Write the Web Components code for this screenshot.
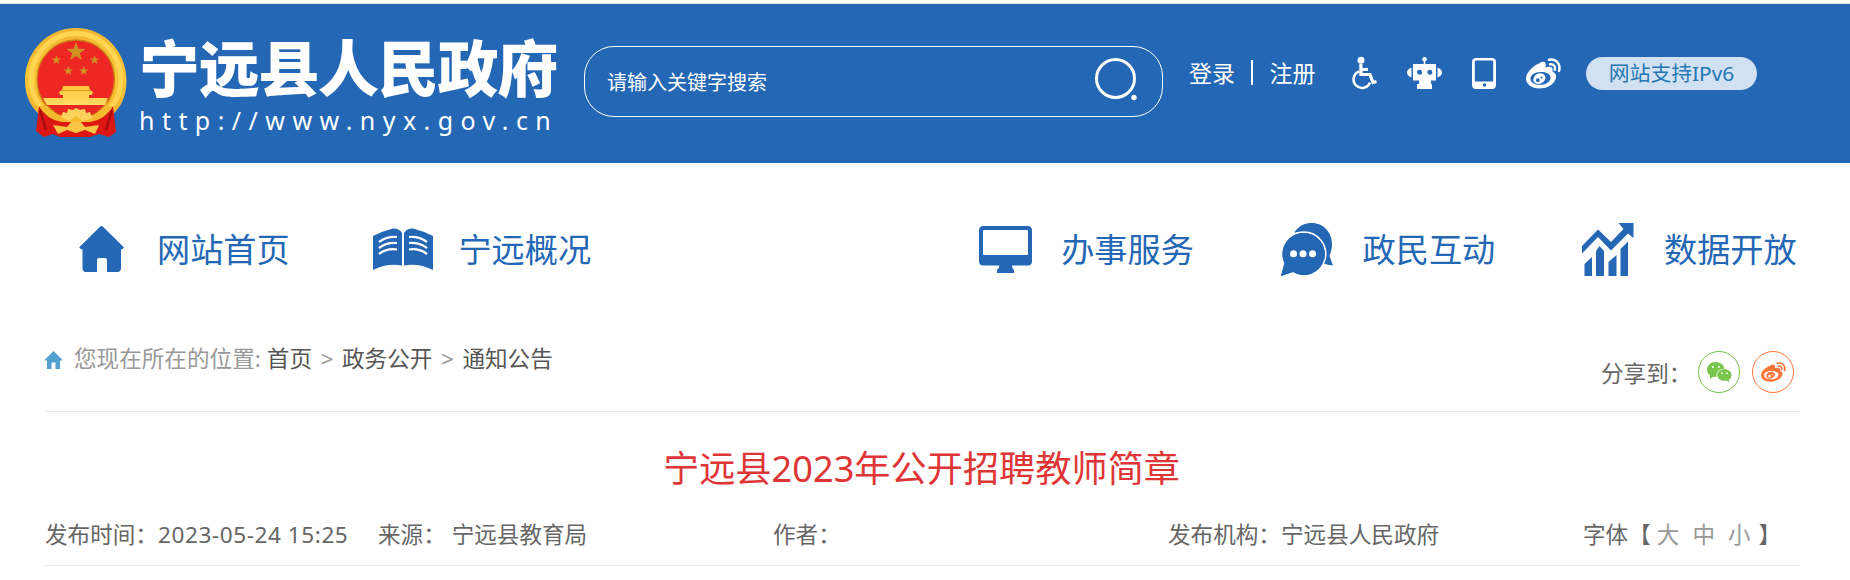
<!DOCTYPE html>
<html lang="zh-CN">
<head>
<meta charset="utf-8">
<title>宁远县2023年公开招聘教师简章</title>
<style>
  body {
    margin: 0;
    width: 1850px;
    height: 580px;
    overflow: hidden;
    background: #fff;
    color: #666;
    font-family: "Noto Sans", "Noto Sans CJK SC", sans-serif;
  }
</style>
</head>
<body>
<gov-page></gov-page>

<script>
const WEIBO = `
  <path fill-rule="evenodd" d="M13 5.500C17 2.500 21 3.500 19.500 9.500C23.500 8 27.500 9 26.500 13.500C30 15.500 31 18 29.500 21.500C27 27.500 20 30.500 13.500 30.500C6 30.500 0 26.500 0 20.500C0 14.500 7 8 13 5.500ZM14.500 14C8.500 14 4.500 17 4.500 20.500C4.500 24.500 8.500 26.800 14 26.800C20 26.800 24.500 24 24.500 19.500C24.500 16 20.500 14 14.500 14Z"/>
  <path fill-rule="evenodd" d="M14 15.200C18 15.200 20.300 18 19.300 21C18.300 24.500 14.500 26.300 11.500 25.800C8 25.300 6.500 22.500 7.700 20C8.700 17 11.500 15.200 14 15.200ZM11.800 20.300A1.900 1.900 0 1 0 11.900 24.100A1.900 1.900 0 1 0 11.800 20.300ZM15.500 18.500A1 1 0 1 0 15.600 20.500A1 1 0 1 0 15.500 18.500Z"/>
  <path d="M23 1.800C30 .5 35 6 33 13M24 6.300C28 6 29.800 8.500 28.800 11.800" fill="none" stroke="currentColor" stroke-width="2.500" stroke-linecap="round"/>`;

const ICONS = {
  search: ['0 0 42 42', `
    <circle cx="20.500" cy="20.500" r="19" fill="none" stroke="currentColor" stroke-width="3"/>
    <circle cx="39" cy="39.500" r="2.700"/>`],
  access: ['0 0 25 32', `
    <circle cx="9" cy="3.300" r="3.500"/>
    <path d="M8.900 7V17.500H18L21 25.500L24.500 24.500M9 12.500H16" fill="none" stroke="currentColor" stroke-width="3.200"/>
    <path d="M7 14.500A8.500 8.500 0 1 0 18 25.500" fill="none" stroke="currentColor" stroke-width="2.600"/>`],
  robot: ['0 0 35 32', `
    <circle cx="17.500" cy="2.300" r="2.300"/>
    <path d="M16.700 3H18.300V8H16.700Z"/>
    <path fill-rule="evenodd" d="M6 7H29V23.500H24V27H25V32H10V27H12V23.500H6ZM12.500 12.800A2.500 2.500 0 1 0 12.600 17.800A2.500 2.500 0 1 0 12.500 12.800ZM22.800 12.800A2.500 2.500 0 1 0 22.900 17.800A2.500 2.500 0 1 0 22.800 12.800Z"/>
    <path d="M4.500 10.500V20.500C1.500 19.500 0 17.500 0 15.500S1.500 11.500 4.500 10.500ZM30.500 10.500V20.500C33.500 19.500 35 17.500 35 15.500S33.500 11.500 30.500 10.500Z"/>`],
  phone: ['0 0 24 31', `
    <path fill-rule="evenodd" d="M4 0H20Q24 0 24 4V27Q24 31 20 31H4Q0 31 0 27V4Q0 0 4 0ZM4 2.500Q2.800 2.500 2.800 4V23.500H21.200V4Q21.200 2.500 20 2.500ZM12.500 25.300A1.700 1.700 0 1 0 12.600 28.700A1.700 1.700 0 1 0 12.500 25.300Z"/>`],
  weibo: ['0 0 35 31', WEIBO],
  wechat: ['0 0 25 20', `
    <path fill-rule="evenodd" d="M8.500 0C13.500 0 17 3 17.500 6.800C12 7 9 10 9.500 14.800L6 15L3 17V13.500C1 12 0 10 0 7.500C0 3.500 4 0 8.500 0ZM5.800 4A1 1 0 1 0 5.900 6A1 1 0 1 0 5.800 4ZM11.800 4A1 1 0 1 0 11.900 6A1 1 0 1 0 11.800 4Z"/>
    <path fill-rule="evenodd" d="M17.500 7.300C21.500 7.300 24.500 10 24.500 13C24.500 15 23.500 16.500 22 17.500L22.500 20L19.500 18.700C14 19.500 10.300 16.700 10.300 13C10.300 10 13.500 7.300 17.500 7.300ZM15 10.300A.9.9 0 1 0 15.100 12.100A.9.9 0 1 0 15 10.300ZM20 10.300A.9.9 0 1 0 20.100 12.100A.9.9 0 1 0 20 10.300Z"/>`],
  crumb: ['0 0 17 18', `<path d="M8.500 0L17 8.500V9.500H15V18H10.500V11.500H6.500V18H2V9.500H0V8.500Z"/>`],
  home: ['0 0 45 46', `<path d="M21 .8Q22.500-.6 24 .8L44.500 21Q45.500 22.500 42 23.500V42Q42 46 38 46H28V34Q28 32 26 32H20Q18 32 18 34V46H7Q3.500 46 3.500 42V23.500Q-.5 22.500 .5 21Z"/>`],
  book: ['0 0 60 42', `
    <path d="M0 8Q10 3 20 .5Q26 0 29 5V37.500Q14 35 0 42ZM60 8Q50 3 40 .5Q34 0 31 5V37.500Q46 35 60 42Z"/>
    <path d="M6 14Q14 8 24 9M6 20Q14 14 24 15M6 26Q14 20 24 21.500M54 14Q46 8 36 9M54 20Q46 14 36 15M54 26Q46 20 36 21.500" fill="none" stroke="#fff" stroke-width="2.200"/>`],
  monitor: ['0 0 53 47', `
    <path fill-rule="evenodd" d="M4.500 0H48.500Q53 0 53 4.500V35Q53 39.500 48.500 39.500H33Q33 42.500 35 44V47H18V44Q20.500 42.500 20.500 39.500H4.500Q0 39.500 0 35V4.500Q0 0 4.500 0ZM5 4Q4 4 4 5V28Q4 29 5 29H48Q49 29 49 28V5Q49 4 48 4Z"/>`],
  chat: ['0 0 52 53', `
    <path d="M13.500 9C19 2 24 0 31 0C42 0 51 9 51 21C51 27 49 31 48.500 33L52 42.500Q47 42 41 40Z"/>
    <path d="M22 10A21 21 0 1 1 12 49L0 53L3.500 40A21 21 0 0 1 22 10Z" stroke="#fff" stroke-width="3.400" paint-order="stroke"/>
    <path d="M22 10A21 21 0 1 1 12 49L0 53L3.500 40A21 21 0 0 1 22 10Z"/>
    <g fill="#fff"><circle cx="12.500" cy="30.800" r="3.500"/><circle cx="22" cy="30.800" r="3.500"/><circle cx="31.500" cy="30.800" r="3.500"/></g>`],
  chart: ['0 0 52 53', `
    <path d="M0 23L16 6.500L29 19L41.500 6L36.500 0H51.500V15L46 10.500L29 27.500L16 14L0 30.500Z"/>
    <path d="M2.500 41L10 34V53H2.500ZM14 28L17.500 23L22 28V53H14ZM26.500 39L34.500 32V53H26.500ZM38.500 26L46 18.500V53H38.500Z"/>`],
};

class SiteIcon extends HTMLElement {
  connectedCallback() {
    const [box, shapes] = ICONS[this.getAttribute('name')];
    this.attachShadow({ mode: 'open' }).innerHTML = `
      <style>
        :host { display: block; flex: none; }
        svg { display: block; width: 100%; height: 100%; overflow: visible; fill: currentColor; }
      </style>
      <svg viewBox="${box}" preserveAspectRatio="none" aria-hidden="true">${shapes}</svg>`;
  }
}
customElements.define('site-icon', SiteIcon);

function star(cx, cy, r) {
  const points = [];
  for (let i = 0; i < 10; i++) {
    const angle = -Math.PI / 2 + i * Math.PI / 5;
    const d = i % 2 ? r * 0.4 : r;
    points.push(`${(cx + Math.cos(angle) * d).toFixed(1)},${(cy + Math.sin(angle) * d).toFixed(1)}`);
  }
  return `<polygon points="${points.join(' ')}"/>`;
}

class NationalEmblem extends HTMLElement {
  connectedCallback() {
    this.attachShadow({ mode: 'open' }).innerHTML = `
      <style>
        :host { display: block; flex: none; width: 102px; height: 110px; }
        svg { display: block; }
      </style>
      <svg width="102" height="110" viewBox="0 0 102 110" aria-hidden="true">
        <defs>
          <linearGradient id="rim" x2="0" y2="1">
            <stop offset="0" stop-color="#f3b632"/>
            <stop offset=".5" stop-color="#fbc636"/>
            <stop offset="1" stop-color="#f2ae28"/>
          </linearGradient>
          <linearGradient id="gold" x2="0" y2="1">
            <stop offset="0" stop-color="#ffc93c"/>
            <stop offset="1" stop-color="#ffdb62"/>
          </linearGradient>
        </defs>
        <path d="M51 0C79 0 101.500 23 101.500 53C101.500 69 95 80 88 86L78 98H24L14 86C7 80 0 69 0 53C0 23 23 0 51 0Z" fill="url(#rim)"/>
        <path d="M51 5.500C76 5.500 96 27 96 52C96 64 92 73 84 81M51 5.500C26 5.500 6 27 6 52C6 64 10 73 18 81" fill="none" stroke="#ffd552" stroke-width="5"/>
        <path d="M51 12C73 12 89.500 30 89.500 51C89.500 63 86 71 79 78L68 87H34L22 78C15 71 12 63 12 51C12 30 29 12 51 12Z" fill="#ee2724" stroke="#c98518" stroke-width="1.400"/>
        <g fill="#cf9322">
          ${star(51, 24, 10)}${star(31.4, 32, 5)}${star(69.5, 32, 5)}${star(43.3, 43, 5)}${star(58.8, 43, 5)}
        </g>
        <path d="M38 58H64L65 62L68 64L67 67H64V70H83L80 77H22L18 70H38V67H35L34 64L37 62Z" fill="url(#gold)"/>
        <path d="M36 62.500H66" stroke="#de8d1d" stroke-width=".8"/>
        <path d="M14 78Q21 90 35 93H67Q81 90 88 78L91 104L84 109L74 106L65 109H35L28 106L19 109L11 103Z" fill="#dc1712"/>
        <path d="M15 82L21 102M87 82L81 102" stroke="#a90c10" stroke-width="2.500"/>
        <path d="M24 77H79L72 84L65 88H37L30 84Z" fill="#e82822"/>
        <path d="M14 78Q22 92 37 94H65Q80 92 88 78L80 78Q73 87 64 88H38Q29 87 22 78Z" fill="#f4b92f"/>
        <path d="M36 89L38 84L42 85L43 81L48 82L51 80L55 82L60 81L61 85L65 84L67 90L58 93L51 88L44 93Z" fill="#ffd35b"/>
        <path d="M28 97L42 99L46 94H56L60 99L74 97L70 106L60 102L51 105L42 102L33 106Z" fill="#f9c643"/>
      </svg>`;
  }
}
customElements.define('national-emblem', NationalEmblem);

class SearchBox extends HTMLElement {
  connectedCallback() {
    this.attachShadow({ mode: 'open' }).innerHTML = `
      <style>
        :host {
          display: flex;
          justify-content: space-between;
          flex: none;
          box-sizing: border-box;
          width: 579px;
          height: 71px;
          padding: 11px 25px 0 22px;
          border: 1px solid #fff;
          border-radius: 30px;
        }
        span { font-size: 20px; line-height: 49px; }
        site-icon { width: 42px; height: 42px; }
      </style>
      <span><slot></slot></span>
      <site-icon name="search"></site-icon>`;
  }
}
customElements.define('search-box', SearchBox);

class SiteHeader extends HTMLElement {
  connectedCallback() {
    this.attachShadow({ mode: 'open' }).innerHTML = `
      <style>
        :host {
          display: flex;
          align-items: flex-start;
          box-sizing: border-box;
          height: 160px;
          margin-top: 3px;
          padding-left: 25px;
          border-top: 1px solid #e4e6e8;
          background: #2367b5;
          color: #fff;
          white-space: nowrap;
        }
        national-emblem { margin-top: 24px; }
        .brand { width: 445px; margin: 34px 0 0 12px; }
        h1 { margin: 0; font-size: 61px; line-height: 61px; letter-spacing: -1.300px; font-weight: 900; }
        .url { margin-top: 6px; font-size: 25px; line-height: 30px; letter-spacing: 7.450px; }
        search-box { margin-top: 42px; }
        .account {
          display: flex;
          align-items: center;
          width: 163px;
          height: 34px;
          margin: 51px 0 0 26px;
          font-size: 23px;
        }
        .account i { width: 1.500px; height: 25px; margin: 1px 17px 0 16px; background: #fff; }
        .tools { display: flex; align-items: center; gap: 30px; height: 34px; margin-top: 52px; }
        .access { width: 25px; height: 32px; }
        .robot { width: 35px; height: 32px; }
        .phone { width: 24px; height: 31px; }
        .weibo { width: 35px; height: 31px; }
        .ipv6 {
          width: 171px;
          height: 33px;
          margin: 53px 0 0 25px;
          border-radius: 17px;
          background: #d2e1f1;
          color: #2278b4;
          font-size: 20.800px;
          line-height: 32px;
          text-align: center;
        }
      </style>
      <national-emblem></national-emblem>
      <div class="brand">
        <h1>宁远县人民政府</h1>
        <div class="url">http://www.nyx.gov.cn</div>
      </div>
      <search-box>请输入关键字搜索</search-box>
      <div class="account"><span>登录</span><i></i><span>注册</span></div>
      <div class="tools">
        <site-icon class="access" name="access"></site-icon>
        <site-icon class="robot" name="robot"></site-icon>
        <site-icon class="phone" name="phone"></site-icon>
        <site-icon class="weibo" name="weibo"></site-icon>
      </div>
      <div class="ipv6">网站支持IPv6</div>`;
  }
}
customElements.define('site-header', SiteHeader);

class NavItem extends HTMLElement {
  connectedCallback() {
    const [w, h] = this.getAttribute('size').split('x');
    this.attachShadow({ mode: 'open' }).innerHTML = `
      <style>
        :host { display: flex; align-items: center; height: 60px; }
        .icon { display: flex; justify-content: center; flex: none; width: 91px; }
        site-icon { width: ${w}px; height: ${h}px; }
        span { margin: 2px 0 0 10px; font-size: 33.200px; line-height: 60px; white-space: nowrap; }
      </style>
      <div class="icon"><site-icon name="${this.getAttribute('icon')}"></site-icon></div>
      <span><slot></slot></span>`;
  }
}
customElements.define('nav-item', NavItem);

class SiteNav extends HTMLElement {
  connectedCallback() {
    this.attachShadow({ mode: 'open' }).innerHTML = `
      <style>
        :host {
          display: grid;
          grid-template-columns: repeat(6, 301.400px);
          padding: 56px 0 0 56px;
          height: 116px;
          color: #2367b5;
        }
        .service { grid-column: 4; }
      </style>
      <nav-item icon="home" size="45x46">网站首页</nav-item>
      <nav-item icon="book" size="60x42">宁远概况</nav-item>
      <nav-item class="service" icon="monitor" size="53x47">办事服务</nav-item>
      <nav-item icon="chat" size="52x53">政民互动</nav-item>
      <nav-item icon="chart" size="52x53">数据开放</nav-item>`;
  }
}
customElements.define('site-nav', SiteNav);

class CrumbBar extends HTMLElement {
  connectedCallback() {
    this.attachShadow({ mode: 'open' }).innerHTML = `
      <style>
        :host {
          display: flex;
          justify-content: space-between;
          box-sizing: border-box;
          height: 77px;
          margin: 0 50px 0 45px;
          border-bottom: 1px solid #e2e4e5;
          font-size: 22.600px;
          line-height: 30px;
          white-space: nowrap;
        }
        .path { display: flex; height: 30px; margin-top: 9px; color: #999; }
        .path site-icon { width: 17px; height: 18px; margin: 7px 12px 0 0; color: #529fd2; }
        .path b { font-weight: 400; color: #555; }
        .path b:first-of-type { margin-left: 6px; }
        .path i { width: 30px; font-style: normal; text-align: center; }
        .share { display: flex; align-items: center; height: 42px; margin: 16px 6px 0 0; }
        .share span { width: 97px; margin-top: 4px; line-height: 42px; }
        .round {
          display: flex;
          align-items: center;
          justify-content: center;
          box-sizing: border-box;
          width: 42px;
          height: 42px;
          border: 1px solid currentColor;
          border-radius: 50%;
        }
        .wechat { color: #79c44a; }
        .wechat site-icon { width: 25px; height: 20px; }
        .weibo { margin-left: 12px; color: #ff763b; }
        .weibo site-icon { width: 25px; height: 20px; }
      </style>
      <div class="path">
        <site-icon name="crumb"></site-icon>
        <span>您现在所在的位置:</span><b>首页</b><i>&gt;</i><b>政务公开</b><i>&gt;</i><b>通知公告</b>
      </div>
      <div class="share">
        <span>分享到：</span>
        <div class="round wechat"><site-icon name="wechat"></site-icon></div>
        <div class="round weibo"><site-icon name="weibo"></site-icon></div>
      </div>`;
  }
}
customElements.define('crumb-bar', CrumbBar);

class ArticleHead extends HTMLElement {
  connectedCallback() {
    this.attachShadow({ mode: 'open' }).innerHTML = `
      <style>
        :host { display: block; margin: 0 50px 0 45px; white-space: nowrap; }
        h2 {
          margin: 0 2px 0 0;
          padding-top: 31px;
          color: #de3636;
          font-size: 36.200px;
          line-height: 50px;
          font-weight: 400;
          text-align: center;
        }
        .meta {
          display: grid;
          grid-template-columns: 333px 395px 395px 415px 1fr;
          height: 72px;
          border-bottom: 1px solid #ebebeb;
          font-size: 22.600px;
          line-height: 84px;
        }
        .date { letter-spacing: .55px; }
        .size { display: flex; }
        .size span { color: #999; margin-right: 13px; }
        .size span:first-of-type { margin-left: 6px; }
        .size span:last-of-type { margin-right: 8px; }
      </style>
      <h2><slot></slot></h2>
      <div class="meta">
        <div>发布时间：<span class="date">2023-05-24 15:25</span></div>
        <div>来源： 宁远县教育局</div>
        <div>作者：</div>
        <div>发布机构：宁远县人民政府</div>
        <div class="size">字体【<span>大</span><span>中</span><span>小</span>】</div>
      </div>`;
  }
}
customElements.define('article-head', ArticleHead);

class GovPage extends HTMLElement {
  connectedCallback() {
    this.attachShadow({ mode: 'open' }).innerHTML = `
      <style>
        :host { display: flow-root; }
      </style>
      <site-header></site-header>
      <site-nav></site-nav>
      <crumb-bar></crumb-bar>
      <article-head>宁远县2023年公开招聘教师简章</article-head>`;
  }
}
customElements.define('gov-page', GovPage);
</script>
</body>
</html>
